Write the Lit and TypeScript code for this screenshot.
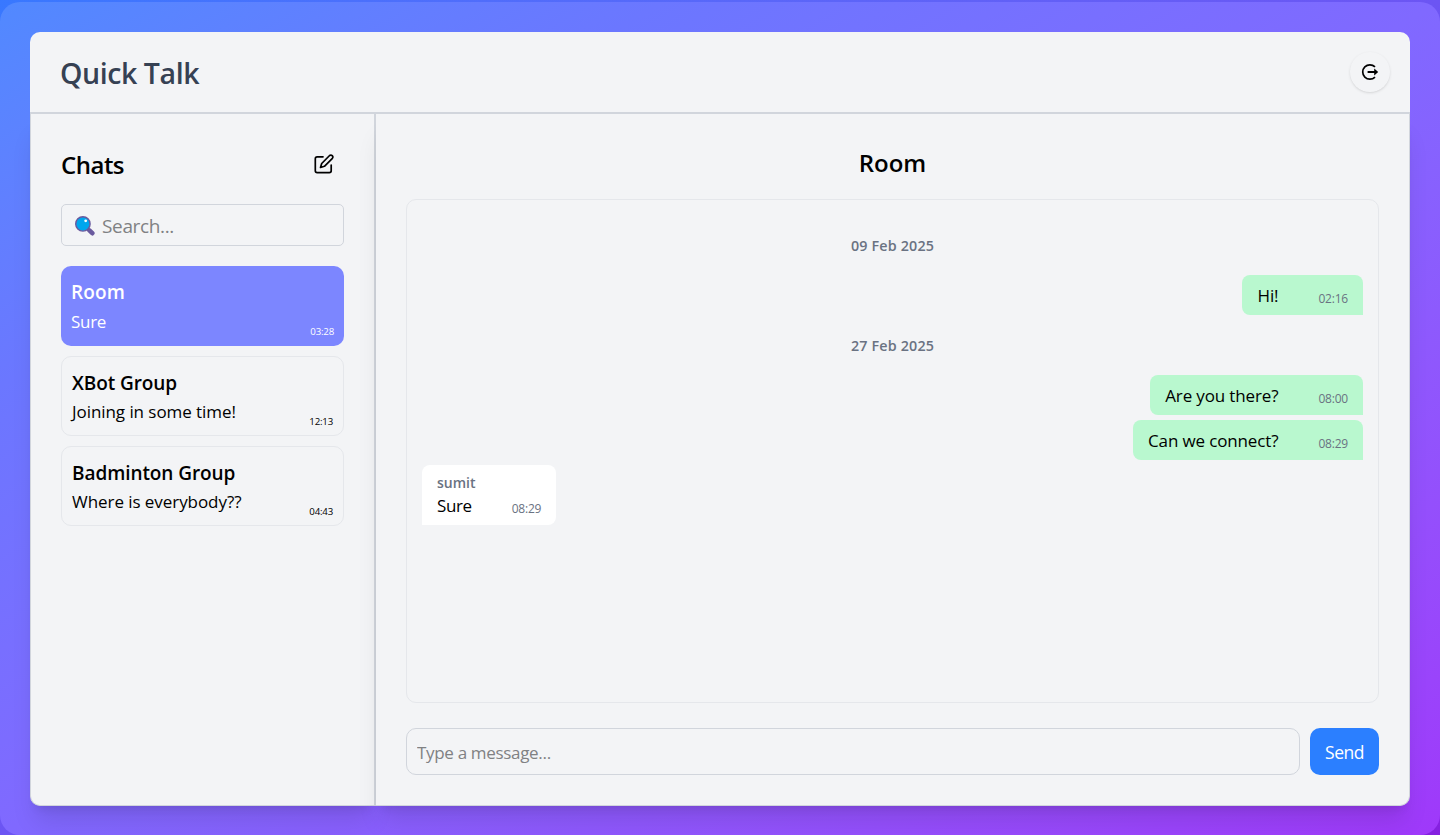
import { LitElement, html, css, svg, nothing } from "lit";
import { customElement } from "lit/decorators.js";
import { classMap } from "lit/directives/class-map.js";

interface Room { name: string; last: string; time: string; active?: boolean }
interface Message { text: string; time: string; own: boolean; sender?: string }
interface Day { date: string; messages: Message[] }

const rooms: Room[] = [
  { name: "Room", last: "Sure", time: "03:28", active: true },
  { name: "XBot Group", last: "Joining in some time!", time: "12:13" },
  { name: "Badminton Group", last: "Where is everybody??", time: "04:43" },
];

const days: Day[] = [
  { date: "09 Feb 2025", messages: [{ text: "Hi!", time: "02:16", own: true }] },
  {
    date: "27 Feb 2025",
    messages: [
      { text: "Are you there?", time: "08:00", own: true },
      { text: "Can we connect?", time: "08:29", own: true },
      { text: "Sure", time: "08:29", own: false, sender: "sumit" },
    ],
  },
];

const logoutIcon = svg`<svg width="20" height="20" viewBox="0 0 20 20" fill="none" stroke="#000" stroke-width="1.7">
  <path d="M15 4.9A7.2 7.2 0 1 0 15 15.1"/><path d="M7.6 10H16" stroke-width="2"/><path d="M14.2 6.6L18.2 10L14.2 13.4Z" fill="#000" stroke="none"/></svg>`;

const editIcon = svg`<svg width="20" height="20" viewBox="0 0 20 20" fill="none" stroke="#000" stroke-width="1.7" stroke-linecap="round" stroke-linejoin="round">
  <path d="M9 2.8H3.2A1.9 1.9 0 0 0 1.3 4.7V16.8A1.9 1.9 0 0 0 3.2 18.7H15.3A1.9 1.9 0 0 0 17.2 16.8V11"/>
  <path d="M15.6 1.5A2 2 0 0 1 18.4 4.3L10.4 12.3L6.5 13.5L7.7 9.5Z"/></svg>`;

const searchIcon = svg`<svg width="20" height="20" viewBox="0 0 20 20">
  <path d="M14.4 14.4L17.3 17.2" stroke="#6a5a9e" stroke-width="4.6" stroke-linecap="round"/>
  <path d="M12.5 12.5L15 15" stroke="#6a5a9e" stroke-width="2"/>
  <circle cx="7.9" cy="7.9" r="7.2" fill="#00a6ed" stroke="#6a5a9e" stroke-width="1.4"/>
  <circle cx="10.7" cy="4.8" r="1.4" fill="#fff"/></svg>`;

@customElement("app-root")
export class AppRoot extends LitElement {
  static styles = css`
    :host { display: block; height: 835px; color: #000; font-family: "Open Sans", "Noto Sans", sans-serif; }
    * { box-sizing: border-box; }
    h1, h2, h3, p { margin: 0; }
    button { font: inherit; border: 0; padding: 0; background: none; }
    .page { height: 100%; padding-top: 2px; background: linear-gradient(to bottom right in oklab, #3878ff, #6c55f3 50%, #8520e0); overflow: hidden; }
    .frame { height: 833px; padding: 30px 30px 29px; border-radius: 20px; background: linear-gradient(to bottom right in oklab, #5189ff, #6b77ff 23%, #8069ff 50%, #9f38fa); display: flex; flex-direction: column; }
    .header { height: 82px; flex: none; display: flex; align-items: center; justify-content: space-between; padding: 0 20px 0 30px; background: #f3f4f6; border-bottom: 2px solid #d1d5dc; border-radius: 10px 10px 0 0; }
    .brand { font-size: 28.5px; line-height: 36px; font-weight: 600; color: #364153; letter-spacing: -.42px; padding-top: 2px; }
    .logout { width: 40px; height: 40px; border-radius: 50%; display: flex; align-items: center; justify-content: center; box-shadow: 0 1px 3px #0000001a, 0 1px 2px -1px #0000001a; }
    .body { flex: 1; min-height: 0; display: flex; }
    .side { width: 346px; flex: none; padding: 30px; background: #f3f4f6; border: 1px solid #d1d5dc; border-top: 0; border-right-width: 2px; border-radius: 0 0 0 10px; box-shadow: 0 20px 25px -5px #0000001a, 0 8px 10px -6px #0000001a; }
    .side-head { height: 40px; display: flex; align-items: center; justify-content: space-between; padding: 0 10px 0 0; margin-bottom: 20px; }
    .side-title { font-size: 24px; line-height: 36px; font-weight: 600; letter-spacing: -.5px; padding-top: 2px; }
    .edit { display: flex; }
    .search { height: 42px; display: flex; align-items: center; gap: 7px; padding: 2px 13px 0; border: 1px solid #d1d5dc; border-radius: 5px; margin-bottom: 20px; font-size: 19px; letter-spacing: -.35px; color: #808183; }
    .rooms { display: flex; flex-direction: column; gap: 10px; }
    .room { height: 80px; display: grid; grid-template-columns: 1fr auto; align-content: start; padding: 11px 10px 0; border: 1px solid #e5e7eb; border-radius: 10px; }
    .room.active { border: 0; background: #7c86ff; color: #fff; }
    .name { grid-column: 1 / 3; font-size: 19px; line-height: 30px; font-weight: 600; letter-spacing: -.08px; }
    .active .name { letter-spacing: .1px; }
    .last { font-size: 17px; line-height: 28px; letter-spacing: -.06px; }
    .active .last { padding-top: 1px; letter-spacing: -.3px; }
    .stamp { font-size: 9.7px; line-height: 14px; align-self: end; letter-spacing: -.2px; transform: translateY(3px); }
    .main { flex: 1; min-width: 0; padding: 30px; display: flex; flex-direction: column; background: #f3f4f6; border: 1px solid #d1d5dc; border-top: 0; border-left: 0; border-radius: 0 0 10px 0; box-shadow: 0 20px 25px -5px #0000001a, 0 8px 10px -6px #0000001a; }
    .title { height: 40px; margin-bottom: 15px; text-align: center; font-size: 24px; line-height: 38px; font-weight: 600; }
    .log { flex: 1; border: 1px solid #e5e7eb; border-radius: 10px; padding: 20px 15px 15px; display: flex; flex-direction: column; gap: 5px; }
    .day { height: 20px; margin: 15px 0; text-align: center; font-size: 14.3px; line-height: 21px; font-weight: 600; letter-spacing: .18px; color: #6a7282; flex: none; }
    .bubble { align-self: flex-start; padding: 5px 15px; background: #fff; border-radius: 8px 8px 8px 0; flex: none; }
    .bubble.own { align-self: flex-end; background: #b9f8cf; border-radius: 8px 8px 0 8px; }
    .sender { font-size: 14px; line-height: 25px; height: 22px; font-weight: 600; color: #6a7282; }
    .line { height: 30px; display: flex; align-items: baseline; justify-content: space-between; line-height: 31px; }
    .bubble:not(.own) .line { height: 28px; line-height: 28px; }
    .text { font-size: 17px; letter-spacing: -.14px; }
    .bubble:not(.own) .text { letter-spacing: -.4px; }
    .time { font-size: 12px; color: #6a7282; margin-left: 40px; letter-spacing: -.2px; transform: translateY(1px); }
    .compose { height: 47px; margin-top: 25px; display: flex; gap: 10px; }
    .field { flex: 1; min-width: 0; font: inherit; font-size: 17px; letter-spacing: -.32px; padding: 2px 10px 0; background: none; border: 1px solid #d1d5dc; border-radius: 10px; outline: 0; }
    .field::placeholder { color: #808183; opacity: 1; }
    .send { width: 69px; border-radius: 10px; background: #2b7fff; color: #fff; font-size: 17.5px; letter-spacing: -.5px; }
  `;

  render() {
    return html`<div class="page"><div class="frame">
      <header class="header"><h1 class="brand">Quick Talk</h1><button class="logout" aria-label="Log out">${logoutIcon}</button></header>
      <div class="body">
        <aside class="side">
          <div class="side-head"><h2 class="side-title">Chats</h2><button class="edit" aria-label="New chat">${editIcon}</button></div>
          <div class="search">${searchIcon}<span class="ph">Search...</span></div>
          <div class="rooms">${rooms.map((r) => html`<div class=${classMap({ room: true, active: !!r.active })}>
            <h3 class="name"><span>${r.name}</span></h3><p class="last">${r.last}</p><span class="stamp">${r.time}</span></div>`)}</div>
        </aside>
        <main class="main">
          <h2 class="title">Room</h2>
          <div class="log">${days.map((d) => html`<div class="day">${d.date}</div>
            ${d.messages.map((m) => html`<div class=${classMap({ bubble: true, own: m.own })}>
              ${m.sender ? html`<div class="sender">${m.sender}</div>` : nothing}
              <div class="line"><span class="text">${m.text}</span><span class="time">${m.time}</span></div></div>`)}`)}</div>
          <div class="compose"><input class="field" placeholder="Type a message..." /><button class="send">Send</button></div>
        </main>
      </div>
    </div></div>`;
  }
}
